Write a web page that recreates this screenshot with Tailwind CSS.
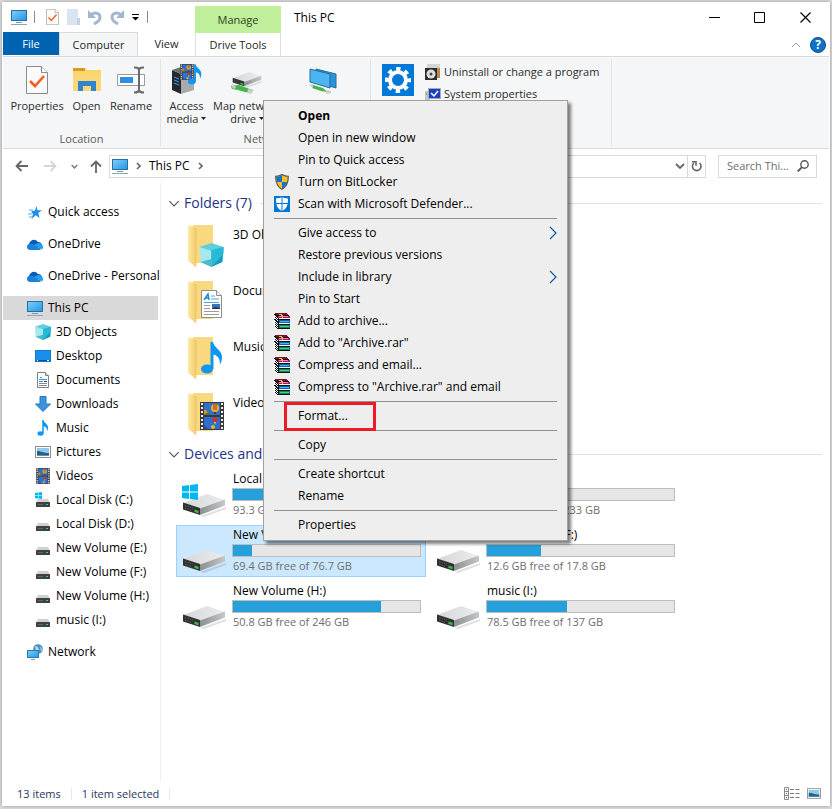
<!DOCTYPE html>
<html lang="en">
<head>
  <meta charset="UTF-8" />
  <meta name="viewport" content="width=device-width, initial-scale=1.0">
  <title>This PC</title>
  <script src="https://cdn.jsdelivr.net/npm/@tailwindcss/browser@4"></script>
</head>

<body class="flex min-h-screen flex-col bg-[#dedede] p-[2px] pb-[3px] font-['Open_Sans','Noto_Sans',sans-serif] text-[12px] leading-4 text-black">

  <!-- Icon sprite -->
  <svg class="absolute h-0 w-0" aria-hidden="true">
    <defs>
      <linearGradient id="screen" x1="0" y1="0" x2="1" y2="1"><stop offset="0" stop-color="#7fd0fb"/><stop offset="1" stop-color="#1f95e6"/></linearGradient>
      <linearGradient id="flap" x1="0" y1="0" x2="1" y2="0"><stop offset="0" stop-color="#ffe9a6"/><stop offset="1" stop-color="#f3cb6b"/></linearGradient>
      <linearGradient id="metal" x1="0" y1="0" x2="1" y2="0"><stop offset="0" stop-color="#d6d7d9"/><stop offset="1" stop-color="#ececee"/></linearGradient>
      <linearGradient id="metalSide" x1="0" y1="0" x2="1" y2="0"><stop offset="0" stop-color="#8d8e90"/><stop offset="1" stop-color="#c6c7c9"/></linearGradient>

      <symbol id="pc" viewBox="0 0 16 16">
        <rect x=".5" y="1.5" width="15" height="10" fill="url(#screen)" stroke="#2b6f9c"/>
        <path d="M5 13.5h6" stroke="#6f9cbd"/><path d="M0 15.5h16" stroke="#8aa7bb"/>
      </symbol>
      <symbol id="checkdoc" viewBox="0 0 22 28">
        <path d="M.5.5h15l6 6v21H.5z" fill="#fbfbfb" stroke="#8b8b8b"/><path d="M15.500.5v6h6" fill="#fff" stroke="#8b8b8b"/>
        <path d="M4 15l5 5 9-10" fill="none" stroke="#f2611c" stroke-width="2.600"/>
      </symbol>
      <symbol id="cube" viewBox="0 0 24 24">
        <path d="M0 4l12 3v17L1 19z" fill="#a5e8ee"/><path d="M12 7l12-3-1 15-11 5z" fill="#0e9cc4"/>
        <path d="M0 4l12-4 12 4-12 4z" fill="#5ecfdd"/><path d="M12 7l12-3v7l-12 13z" fill="#29b9d5"/>
        <path d="M1 19l11-3v8z" fill="#49b9cb"/>
      </symbol>
      <symbol id="textdoc" viewBox="0 0 21 28">
        <path d="M.5.5h15l5 5v22H.5z" fill="#fff" stroke="#8e8e8e"/><path d="M15.500.5v5h5" fill="#eee" stroke="#8e8e8e"/>
        <path d="M3 10l4-6 1 6M5 8h3" fill="none" stroke="#1c8ad6" stroke-width="1.500"/>
        <path d="M10 6h4M10 9h8M3 12.500h15" stroke="#4ba3df"/><path d="M3 15.500h6M3 18.500h6M3 21.500h15M3 24.500h15" stroke="#9a9a9a"/>
        <rect x="11" y="14" width="8" height="5" fill="#3d73b9"/><path d="M11 19l3-2 5 1v1z" fill="#234"/>
      </symbol>
      <symbol id="minidoc" viewBox="0 0 16 16">
        <path d="M2.500.5h8l3 3v12h-11z" fill="#fff" stroke="#808080"/><path d="M10.500.5v3h3" fill="#eee" stroke="#808080"/>
        <path d="M5 5.500h2M4 7.500h8M4 9.500h4" stroke="#2d96dc"/><path d="M9 9.500h3" stroke="#345"/><path d="M4 11.500h8M4 13.500h8" stroke="#8a8a8a"/>
      </symbol>
      <symbol id="note" viewBox="0 0 22 32">
        <ellipse cx="6" cy="27" rx="6" ry="4.500" fill="#0d96f2"/>
        <path d="M9.500 0H12c1 6 9 8 9 15 0 4-1 5-2 8 0-7-2-9-6.500-10.500V27h-3z" fill="#0d96f2"/>
      </symbol>
      <symbol id="film" viewBox="0 0 24 28">
        <rect width="24" height="28" fill="#3a3a3c"/><rect x="4" y="1" width="16" height="12" fill="#2f6fd0"/><rect x="4" y="15" width="16" height="12" fill="#2f6fd0"/>
        <path d="M2 1v27M22 1v27" stroke="#eee" stroke-width="2" stroke-dasharray="2 2"/>
        <circle cx="15" cy="6" r="4" fill="#e8b529"/><path d="M14 2v6M16 2v6" stroke="#b3261e"/><path d="M14 10h2v2h-2z" fill="#5b3a12"/><path d="M4 8c2-1 4 1 4 5H4z" fill="#e8892b"/><path d="M4 13c3-3 5-2 7 0z" fill="#3f7d34"/>
        <circle cx="15" cy="17.500" r="2.500" fill="#c8371f"/><path d="M14 20h2l-1 3z" fill="#f2d13c"/><circle cx="13" cy="25" r="2" fill="#e8b529"/><path d="M4 27v-4l5 4z" fill="#27539c"/>
      </symbol>
      <symbol id="picture" viewBox="0 0 16 12">
        <rect x=".5" y=".5" width="15" height="11" fill="#fff" stroke="#8d8d8d"/><rect x="2" y="2" width="12" height="8" fill="#8fc9f4"/>
        <path d="M2 5c4 0 6 2 12 2v3H2z" fill="#2d5f78"/><path d="M2 9h12v1H2z" fill="#4a93c9"/>
      </symbol>
      <symbol id="desktop" viewBox="0 0 16 12">
        <rect x=".5" y=".5" width="15" height="11" fill="#1590ee" stroke="#1778c4"/><path d="M1 10.500h14" stroke="#0b4f8f"/><path d="M2 10.500h1M12 10.500h2" stroke="#fff"/>
      </symbol>
      <symbol id="download" viewBox="0 0 16 16">
        <path d="M5 .5h6V8h4.500L8 15.500.5 8H5z" fill="#3b93e0" stroke="#2a76bb"/>
      </symbol>
      <symbol id="folder" viewBox="0 0 40 44">
        <path d="M6 0h20v38H6z" fill="#f8d980"/><path d="M1 0l8 3v39l-8-6z" fill="url(#flap)"/><path d="M9 3v39" stroke="#e8bd5b" stroke-width=".6"/>
      </symbol>
      <symbol id="drive" viewBox="0 0 44 24">
        <path d="M18 23l26-9v2L22 24z" fill="#000" opacity=".12"/>
        <path d="M1 10L25 1l18 6-24 9z" fill="url(#metal)"/><path d="M18 15.500l25-9v6L18 22z" fill="url(#metalSide)"/>
        <path d="M1 9.500l17 5.500v7L1 16.500z" fill="#303133"/><path d="M3 12.500l8 2.500M3 15l7 2.500" stroke="#5a5a5a" stroke-dasharray="1.500 1"/><path d="M12.500 16.500l4 1.300v2.400l-4-1.300z" fill="#35c13c"/>
      </symbol>
      <symbol id="minidrive" viewBox="0 0 14 8">
        <path d="M2 0h10l2 4H0z" fill="#cfd1d3"/><rect y="3" width="14" height="5" rx=".5" fill="#3e4042"/><path d="M2 5.500h5" stroke="#666"/><path d="M10 5.500h2" stroke="#3be13f"/>
      </symbol>
      <symbol id="winlogo" viewBox="0 0 16 16">
        <path d="M0 2l7-1v6.500H0zM8 1l8-1v7.500H8zM0 8.500h7V15l-7-1zM8 8.500h8V16l-8-1z" fill="#00b8f1"/>
      </symbol>
      <symbol id="cloud" viewBox="0 0 16 11">
        <path d="M3 10.500A3 3 0 0 1 2 5C3 1 8-1 11 3c3 0 4 2 4 4z" fill="#0a5cb5"/>
        <path d="M0 8c0-3 3-4 6-3l8 5c-.5.700-1 1-2 1H3.500C1.500 11 0 10 0 8z" fill="#1a80d8"/><path d="M7 6l4-2c3 0 5 2 5 4 0 1-.5 2-1 2.500z" fill="#2a9cec"/>
      </symbol>
      <symbol id="star" viewBox="0 0 14 13">
        <path d="M8.500 0l1 4.300H14L10.300 7l1.200 5L7.800 9.300 3.500 13l1.500-5-2-2.700 4-.8z" fill="#1c8fe8"/><path d="M1 4h4M0 8h4M1 11h3" stroke="#4cabf2"/>
      </symbol>
      <symbol id="globe" viewBox="0 0 16 16">
        <circle cx="11" cy="5" r="4.800" fill="#4a90c4"/><path d="M8 2l3 1 1 3-3 1zM13 2l2 3-1 3z" fill="#b4dbe8"/>
        <rect x=".5" y="6.500" width="11" height="7" fill="url(#screen)" stroke="#2f78ad"/><path d="M4 15.500h4" stroke="#7da3bb"/>
      </symbol>
      <symbol id="uac" viewBox="0 0 16 16">
        <path d="M8 .7c2 1 4 1.600 6.300 1.600 0 6-1 10-6.300 13C2.700 12.300 1.700 8.300 1.700 2.300 4 2.300 6 1.700 8 .7z" fill="#f9bd2c" stroke="#5a5a5a" stroke-width="1.300"/>
        <path d="M8 1.500C6.200 2.400 4.300 2.800 2.400 2.900L2.800 8H8z" fill="#1273c9"/><path d="M8 8h5.200c-.6 3-2 5-5.200 6.600z" fill="#1273c9"/>
      </symbol>
      <symbol id="defender" viewBox="0 0 16 16">
        <rect width="16" height="16" fill="#0078d7"/><path d="M8 1c2 1 4 1.400 6 1.400C14 9 13 12.500 8 15 3 12.500 2 9 2 2.400 4 2.400 6 2 8 1z" fill="#fff"/>
        <path d="M8 1v14M2 7.500h12" stroke="#0078d7"/>
      </symbol>
      <symbol id="rar" viewBox="0 0 16 16" shape-rendering="crispEdges">
        <path d="M1 1h12l3 3v12H4l-4-3V1z" fill="#111"/>
        <path d="M0 1l2-1h10l3 2H4z" fill="#7c1230"/>
        <path d="M4 3h12v2H4z" fill="#b01677"/><path d="M5 3.500h9" stroke="#ef7cc0"/><path d="M5 5h11v1H5z" fill="#f4f4f4"/>
        <path d="M5 7h11v3H5z" fill="#0a62b0"/><path d="M6 8.500h9" stroke="#4fb0f0"/><path d="M5 10h11v1H5z" fill="#f4f4f4"/>
        <path d="M5 12h11v3H5z" fill="#0a8a55"/><path d="M6 13.500h9" stroke="#3fd296"/>
        <path d="M0 2.500l4 3M0 4.500l4 3M0 7.500l4 3M0 9.500l4 3M0 11.500l4 3" stroke="#fff"/><path d="M5 1h2v1h1v3" fill="none" stroke="#e0c02b"/>
      </symbol>
      <symbol id="chev" viewBox="0 0 10 6"><path d="M1 1l4 4 4-4" fill="none" stroke="currentColor" stroke-width="var(--w,1)"/></symbol>
      <symbol id="caret" viewBox="0 0 5 3"><path d="M0 0h5L2.500 3z" fill="#222"/></symbol>
      <symbol id="submenu" viewBox="0 0 8 14"><path d="M1 1l6 6-6 6" fill="none" stroke="#15589c" stroke-width="1.200"/></symbol>
      <symbol id="sep" viewBox="0 0 5 8"><path d="M1 1l3 3-3 3" fill="none" stroke="#666" stroke-width="1.600"/></symbol>
      <symbol id="undo" viewBox="0 0 14 16">
        <path d="M3 6C8 2 12 5 12 8.500S9 13 6 15" fill="none" stroke="#a3b6cf" stroke-width="3"/><path d="M0 1v8h8z" fill="#a3b6cf"/>
      </symbol>
    </defs>
  </svg>

  <div class="flex flex-1 flex-col bg-white px-px shadow-[0_0_4px_rgba(0,0,0,0.35)]">

    <!-- Title bar and tabs -->
    <header class="flex h-[54px]">
      <div class="flex w-[192px] flex-col">
        <div class="flex h-[31px] items-center pl-2">
          <svg class="h-4 w-4"><use href="#pc"/></svg>
          <span class="ml-[7px] h-3 w-px bg-[#8c8c8c]"></span>
          <button class="ml-[11px]" aria-label="Properties"><svg class="h-4 w-[13px]"><use href="#checkdoc"/></svg></button>
          <button class="ml-2" aria-label="New folder"><svg class="h-4 w-[13px]" viewBox="0 0 13 16"><path d="M0 0h11v16H0z" fill="#d9e4f2"/><path d="M10 9h3v7h-3z" fill="#c3d2e6"/></svg></button>
          <button class="ml-2" aria-label="Undo"><svg class="h-4 w-[14px]"><use href="#undo"/></svg></button>
          <button class="ml-2" aria-label="Redo"><svg class="h-4 w-[14px] -scale-x-100"><use href="#undo"/></svg></button>
          <button class="ml-2" aria-label="Customize"><svg class="h-[7px] w-[7px]" viewBox="0 0 7 7"><path d="M0 .5h7" stroke="#000"/><path d="M0 3h7L3.500 6.500z" fill="#000"/></svg></button>
          <span class="ml-2 h-3 w-px bg-[#8c8c8c]"></span>
        </div>
        <nav class="flex h-6 text-[#1f1f1f]">
          <button class="mb-px w-14 bg-[#0063b1] text-[11px] text-white">File</button>
          <button class="w-[79px] border border-b-0 border-[#dadbdc] bg-[#f5f6f7] text-[11px]">Computer</button>
          <button class="flex-1 text-[11px]">View</button>
        </nav>
      </div>
      <div class="flex w-[86px] flex-col pt-1 text-[11px]">
        <div class="flex h-[27px] items-center justify-center bg-[#c0ef9b] text-[#2e4220]">Manage</div>
        <button class="h-[23px] border-x border-[#dfdfdf] text-[#1f1f1f]">Drive Tools</button>
      </div>
      <div class="flex flex-1 flex-col">
        <div class="flex h-[31px] items-center pl-[13px]">
          <h1 class="flex-1">This PC</h1>
          <button class="flex w-[45px] justify-center" aria-label="Minimize"><svg class="h-[11px] w-[11px]" viewBox="0 0 11 11"><path d="M0 5.500h11" stroke="#000"/></svg></button>
          <button class="flex w-[45px] justify-center" aria-label="Maximize"><svg class="h-[11px] w-[11px]" viewBox="0 0 11 11"><path d="M.5.5h10v10H.5z" fill="none" stroke="#000"/></svg></button>
          <button class="flex w-[47px] justify-center" aria-label="Close"><svg class="h-[11px] w-[11px]" viewBox="0 0 11 11"><path d="M.5.5l10 10M10.500.5l-10 10" stroke="#000" stroke-width="1.200"/></svg></button>
        </div>
        <div class="flex h-[23px] items-center justify-end gap-[9px] pr-[3px] text-[#999]">
          <button aria-label="Collapse ribbon"><svg class="h-[6px] w-[10px] rotate-180"><use href="#chev"/></svg></button>
          <button class="h-4 w-4 rounded-full border border-[#0a4f8f] bg-[#0f70c8] text-[12px] leading-[14px] font-bold text-white" aria-label="Help">?</button>
        </div>
      </div>
    </header>

    <!-- Ribbon -->
    <section class="flex h-[93px] border-y border-[#dadbdc] bg-[#f5f6f7] py-[2px] text-[11px] whitespace-nowrap text-[#2b2b2b]">
      <div class="flex w-[158px] flex-col border-r border-[#e2e3e4]">
        <div class="flex flex-1 pl-[7px]">
          <button class="flex w-[54px] flex-col items-center pt-[7px]"><svg class="mb-1 h-7 w-[22px]"><use href="#checkdoc"/></svg>Properties</button>
          <button class="flex w-[45px] flex-col items-center pt-[7px]">
            <svg class="mb-1 h-7 w-7" viewBox="0 0 28 28"><path d="M0 2h12l2 2h14v21H0z" fill="#fbd46b"/><path d="M0 2h12v3H0z" fill="#d79b2c"/><path d="M0 8h28v17H0z" fill="#fcd775"/><path d="M5 25V15h18v10h-5v-5h-8v5z" fill="#2f83cf"/></svg>Open
          </button>
          <button class="flex w-[44px] flex-col items-center pt-[7px]">
            <svg class="mb-1 h-7 w-7" viewBox="0 0 28 28"><path d="M.5 8.500h27v11H.5z" fill="#fff" stroke="#9b9b9b"/><path d="M3 11h13v6H3z" fill="#2f8fdf"/><path d="M17 1.500c3 0 4 0 5 2 1-2 2-2 5-2M22 3v21M17 26.500c3 0 4 0 5-2 1 2 2 2 5 2" fill="none" stroke="#6b6b6b" stroke-width="2"/></svg>Rename
          </button>
        </div>
        <p class="text-center leading-[15px] text-[#5a5a5a]">Location</p>
      </div>
      <div class="flex w-[210px] flex-col border-r border-[#e2e3e4]">
        <div class="flex flex-1 pl-1 leading-[13px]">
          <button class="flex w-[43px] flex-col items-center pt-1">
            <svg class="mb-1 h-8 w-8" viewBox="0 0 32 32"><path d="M1 7l9 4v20l-9-4z" fill="#26282b"/><path d="M10 11l13-4v20l-13 4z" fill="#a8aaad"/><path d="M1 7l12-4 10 4-13 4z" fill="#6e7073"/><path d="M3 14l5 2M3 17l5 2M3 20l5 2" stroke="#33a0ff"/><svg x="9" y="1" width="14" height="16"><use href="#film"/></svg><svg x="17" y="1" width="14" height="21"><use href="#note"/></svg></svg>
            <span>Access</span><span class="flex items-center gap-[3px]">media <svg class="h-[3px] w-[5px]"><use href="#caret"/></svg></span>
          </button>
          <button class="flex w-[78px] flex-col items-center pt-1">
            <svg class="mb-1 h-8 w-8" viewBox="0 0 32 32"><svg x="1" y="8" width="30" height="17"><use href="#drive"/></svg><path d="M0 23l8-1 8 3 6 2-2 3-6-1-7-2-6-1z" fill="#42b548"/><path d="M0 22l3-1 2 4-3 1zM17 26l6 1-3 4-4-1z" fill="#c9ccd0"/></svg>
            <span>Map network</span><span class="flex items-center gap-[3px]">drive <svg class="h-[3px] w-[5px]"><use href="#caret"/></svg></span>
          </button>
          <button class="flex w-[74px] flex-col items-center pt-2" aria-label="Add a network location">
            <svg class="h-8 w-8" viewBox="0 0 32 32"><path d="M9 2l20 5v14L9 15z" fill="#2b93dd" stroke="#286a99"/><path d="M3 2l20 5v14L3 15z" fill="#4bb4f3" stroke="#286a99"/><path d="M6 18l10 3 4 4-6-1-9-3z" fill="#42b548"/><path d="M2 18l4-1v4zM19 23l5 1v2l-5 1z" fill="#c9ccd0"/></svg>
          </button>
        </div>
        <p class="text-center leading-[15px] text-[#5a5a5a]">Network</p>
      </div>
      <div class="flex w-[241px] flex-col border-r border-[#e2e3e4]">
        <div class="flex flex-1">
          <button class="flex w-[54px] flex-col items-center pt-[5px]" aria-label="Open Settings">
            <svg class="h-8 w-8" viewBox="0 0 32 32"><path d="M0 0h32v32H0z" fill="#0078d7"/><circle cx="16" cy="16" r="8" fill="none" stroke="#fff" stroke-width="4"/><circle cx="16" cy="16" r="11" fill="none" stroke="#fff" stroke-width="4" stroke-dasharray="4.300 4.340" stroke-dashoffset="2.150"/></svg>
          </button>
          <div class="flex flex-col pt-[2px]">
            <button class="flex h-[22px] items-center gap-[3px]"><svg class="h-4 w-4" viewBox="0 0 16 16"><path d="M2 0h13v4H2z" fill="#d4d4d4"/><path d="M12 4h3v10h-3z" fill="#b98a4c"/><path d="M0 4h12v12H0z" fill="#2c2c2c"/><circle cx="6" cy="10" r="4.500" fill="#ddd"/><circle cx="6" cy="10" r="1.500" fill="#444"/></svg>Uninstall or change a program</button>
            <button class="flex h-[22px] items-center gap-[3px]"><svg class="h-4 w-4" viewBox="0 0 16 16"><path d="M0 5h5v11H0z" fill="#c4c4c4"/><path d="M1 7h1v2H1z" fill="#3c3"/><path d="M3.500 2.500h12v10h-12z" fill="#1a3fc4" stroke="#aaa"/><path d="M6 7l3 3 4-5" fill="none" stroke="#fff" stroke-width="1.500"/><path d="M6 15h8" stroke="#999"/></svg>System properties</button>
          </div>
        </div>
      </div>
    </section>

    <!-- Address bar -->
    <div class="flex h-[34px] items-center pr-3 pl-3">
      <button class="mr-4" aria-label="Back"><svg class="h-3 w-[13px]" viewBox="0 0 13 12"><path d="M13 6H1.500M6.500 1l-5 5 5 5" fill="none" stroke="#666" stroke-width="1.800"/></svg></button>
      <button class="mr-[14px]" aria-label="Forward"><svg class="h-3 w-[13px] -scale-x-100" viewBox="0 0 13 12"><path d="M13 6H1.500M6.500 1l-5 5 5 5" fill="none" stroke="#d6d6d6" stroke-width="1.800"/></svg></button>
      <button class="mr-[12px] text-[#777]" aria-label="Recent locations"><svg class="h-[5px] w-[7px] [--w:2]"><use href="#chev"/></svg></button>
      <button class="mr-[7px]" aria-label="Up"><svg class="h-[13px] w-3" viewBox="0 0 12 13"><path d="M6 13V1.500M1 6.500l5-5 5 5" fill="none" stroke="#666" stroke-width="1.800"/></svg></button>
      <div class="flex h-[23px] flex-1 items-center border border-[#d9d9d9] pl-[2px]">
        <svg class="h-4 w-4"><use href="#pc"/></svg>
        <svg class="mx-[8px] h-2 w-[5px]"><use href="#sep"/></svg>
        <button class="mr-2">This PC</button>
        <svg class="h-2 w-[5px]"><use href="#sep"/></svg>
        <button class="ml-auto text-[#666]" aria-label="Previous locations"><svg class="mr-[2px] h-[6px] w-[10px] [--w:1.800]"><use href="#chev"/></svg></button>
        <button class="flex h-full w-[18px] items-center justify-center border-l border-[#d9d9d9]" aria-label="Refresh"><svg class="h-3 w-[11px]" viewBox="0 0 11 12"><path d="M8.500 3A4.300 4.300 0 1 1 3 3M1 1.800h4v4" fill="none" stroke="#666" stroke-width="1.600"/></svg></button>
      </div>
      <div class="ml-3 flex h-[23px] w-[99px] items-center border border-[#d9d9d9] pr-[7px] pl-2">
        <input type="text" placeholder="Search This PC" aria-label="Search This PC" class="min-w-0 flex-1 text-[11px] text-ellipsis outline-none placeholder:text-[#6d6d6d]" />
        <svg class="ml-[6px] h-3 w-3" viewBox="0 0 12 12"><circle cx="7.500" cy="4.500" r="3.700" fill="none" stroke="#555" stroke-width="1.400"/><path d="M5 7.200L.7 11.500" stroke="#555" stroke-width="1.800"/></svg>
      </div>
    </div>

    <div class="flex flex-1">
      <!-- Navigation pane -->
      <nav class="flex w-[158px] flex-col gap-2 border-r border-[#f0f0f0] pt-[17px] pr-[2px] whitespace-nowrap">
        <a href="#" class="flex h-6 items-center gap-[5px] pl-6"><svg class="h-[13px] w-4 shrink-0"><use href="#star"/></svg>Quick access</a>
        <a href="#" class="flex h-6 items-center gap-[5px] pl-6"><svg class="h-[11px] w-4 shrink-0"><use href="#cloud"/></svg>OneDrive</a>
        <a href="#" class="flex h-6 items-center gap-[5px] pl-6"><svg class="h-[11px] w-4 shrink-0"><use href="#cloud"/></svg>OneDrive - Personal</a>
        <div>
          <a href="#" class="flex h-6 items-center gap-[5px] bg-[#d9d9d9] pl-6"><svg class="h-4 w-4"><use href="#pc"/></svg>This PC</a>
          <a href="#" class="flex h-6 items-center gap-[5px] pl-8"><svg class="h-4 w-4"><use href="#cube"/></svg>3D Objects</a>
          <a href="#" class="flex h-6 items-center gap-[5px] pl-8"><svg class="h-3 w-4"><use href="#desktop"/></svg>Desktop</a>
          <a href="#" class="flex h-6 items-center gap-[5px] pl-8"><svg class="h-4 w-4"><use href="#minidoc"/></svg>Documents</a>
          <a href="#" class="flex h-6 items-center gap-[5px] pl-8"><svg class="h-4 w-4"><use href="#download"/></svg>Downloads</a>
          <a href="#" class="flex h-6 items-center gap-[5px] pl-8"><svg class="h-4 w-4"><use href="#note"/></svg>Music</a>
          <a href="#" class="flex h-6 items-center gap-[5px] pl-8"><svg class="h-3 w-4"><use href="#picture"/></svg>Pictures</a>
          <a href="#" class="flex h-6 items-center gap-[5px] pl-8"><svg class="h-4 w-4"><use href="#film"/></svg>Videos</a>
          <a href="#" class="flex h-6 items-center gap-[5px] pl-8"><svg class="h-4 w-4" viewBox="0 0 16 16"><svg width="7" height="7"><use href="#winlogo"/></svg><svg x="1" y="7" width="14" height="8"><use href="#minidrive"/></svg></svg>Local Disk (C:)</a>
          <a href="#" class="flex h-6 items-center gap-[5px] pl-8"><svg class="h-4 w-4" viewBox="0 0 16 16"><svg x="1" y="7" width="14" height="8"><use href="#minidrive"/></svg></svg>Local Disk (D:)</a>
          <a href="#" class="flex h-6 items-center gap-[5px] pl-8"><svg class="h-4 w-4" viewBox="0 0 16 16"><svg x="1" y="7" width="14" height="8"><use href="#minidrive"/></svg></svg>New Volume (E:)</a>
          <a href="#" class="flex h-6 items-center gap-[5px] pl-8"><svg class="h-4 w-4" viewBox="0 0 16 16"><svg x="1" y="7" width="14" height="8"><use href="#minidrive"/></svg></svg>New Volume (F:)</a>
          <a href="#" class="flex h-6 items-center gap-[5px] pl-8"><svg class="h-4 w-4" viewBox="0 0 16 16"><svg x="1" y="7" width="14" height="8"><use href="#minidrive"/></svg></svg>New Volume (H:)</a>
          <a href="#" class="flex h-6 items-center gap-[5px] pl-8"><svg class="h-4 w-4" viewBox="0 0 16 16"><svg x="1" y="7" width="14" height="8"><use href="#minidrive"/></svg></svg>music (I:)</a>
        </div>
        <a href="#" class="flex h-6 items-center gap-[5px] pl-6"><svg class="h-4 w-4"><use href="#globe"/></svg>Network</a>
      </nav>

      <!-- Files -->
      <main class="flex-1 pt-[10px] pr-[7px] pl-[7px]">
        <div class="flex h-5 items-center gap-1">
          <svg class="h-[7px] w-3 text-[#555]"><use href="#chev"/></svg>
          <h2 class="text-[14px] text-[#1e3287]">Folders (7)</h2>
          <span class="ml-1 h-px flex-1 bg-[#e2e2e2]"></span>
        </div>
        <div class="mt-2 ml-2 grid grid-cols-[250px] gap-1">
          <a href="#" class="flex h-[52px] pl-[11px]"><svg class="mt-1 h-11 w-10" viewBox="0 0 40 44"><use href="#folder"/><svg x="12" y="18" width="25" height="24"><use href="#cube"/></svg></svg><span class="mt-[6px] ml-[6px]">3D Objects</span></a>
          <a href="#" class="flex h-[52px] pl-[11px]"><svg class="mt-1 h-11 w-10" viewBox="0 0 40 44"><use href="#folder"/><svg x="14" y="9" width="21" height="28"><use href="#textdoc"/></svg></svg><span class="mt-[6px] ml-[6px]">Documents</span></a>
          <a href="#" class="flex h-[52px] pl-[11px]"><svg class="mt-1 h-11 w-10" viewBox="0 0 40 44"><use href="#folder"/><svg x="14" y="5" width="22" height="32"><use href="#note"/></svg></svg><span class="mt-[6px] ml-[6px]">Music</span></a>
          <a href="#" class="flex h-[52px] pl-[11px]"><svg class="mt-1 h-11 w-10" viewBox="0 0 40 44"><use href="#folder"/><svg x="13" y="9" width="24" height="28"><use href="#film"/></svg></svg><span class="mt-[6px] ml-[6px]">Videos</span></a>
        </div>

        <div class="mt-[3px] flex h-5 items-center gap-1">
          <svg class="h-[7px] w-3 text-[#555]"><use href="#chev"/></svg>
          <h2 class="text-[14px] text-[#1e3287]">Devices and drives (6)</h2>
          <span class="ml-1 h-px flex-1 bg-[#e2e2e2]"></span>
        </div>
        <div id="drives" class="mt-[5px] ml-2 grid grid-cols-[250px_250px] gap-1"></div>
      </main>
    </div>

    <!-- Status bar -->
    <footer class="flex h-[25px] items-center pr-2 pl-[14px] text-[11px] text-[#1e395b]">
      <span class="border-r border-[#e8e8e8] pr-[10px] leading-3">13 items</span>
      <span class="border-r border-[#e8e8e8] px-[10px] leading-3">1 item selected</span>
      <button class="ml-auto" aria-label="Details view"><svg class="h-[13px] w-4" viewBox="0 0 16 13"><path d="M.5.5h4v12h-4zM.5 4.500h4M.5 8.500h4" fill="none" stroke="#8a8a8a"/><path d="M2 2.500h1M2 6.500h1" stroke="#1a7ad0"/><path d="M2 10.500h1" stroke="#c22"/><path d="M6 2.500h10M6 6.500h10M6 10.500h10" stroke="#777" stroke-dasharray="4 1.500"/></svg></button>
      <button class="ml-[7px]" aria-label="Large icons view"><svg class="h-[11px] w-[14px]"><use href="#picture"/></svg></button>
    </footer>
  </div>

  <!-- Context menu -->
  <div role="menu" class="absolute top-[100px] left-[263px] flex w-[305px] flex-col border border-[#a0a0a0] bg-[#eeeeee] px-[10px] py-1 shadow-[3px_3px_3px_rgba(0,0,0,0.5)]">
    <button role="menuitem" class="h-[22px] pl-6 text-left font-bold">Open</button>
    <button role="menuitem" class="h-[22px] pl-6 text-left">Open in new window</button>
    <button role="menuitem" class="h-[22px] pl-6 text-left">Pin to Quick access</button>
    <button role="menuitem" class="flex h-[22px] items-center gap-2"><svg class="h-4 w-4"><use href="#uac"/></svg>Turn on BitLocker</button>
    <button role="menuitem" class="flex h-[22px] items-center gap-2"><svg class="h-4 w-4"><use href="#defender"/></svg>Scan with Microsoft Defender...</button>
    <hr class="my-[3px] border-[#919191]">
    <button role="menuitem" class="flex h-[22px] items-center justify-between pl-6">Give access to<svg class="h-[14px] w-2"><use href="#submenu"/></svg></button>
    <button role="menuitem" class="h-[22px] pl-6 text-left">Restore previous versions</button>
    <button role="menuitem" class="flex h-[22px] items-center justify-between pl-6">Include in library<svg class="h-[14px] w-2"><use href="#submenu"/></svg></button>
    <button role="menuitem" class="h-[22px] pl-6 text-left">Pin to Start</button>
    <button role="menuitem" class="flex h-[22px] items-center gap-2"><svg class="h-4 w-4"><use href="#rar"/></svg>Add to archive...</button>
    <button role="menuitem" class="flex h-[22px] items-center gap-2"><svg class="h-4 w-4"><use href="#rar"/></svg>Add to "Archive.rar"</button>
    <button role="menuitem" class="flex h-[22px] items-center gap-2"><svg class="h-4 w-4"><use href="#rar"/></svg>Compress and email...</button>
    <button role="menuitem" class="flex h-[22px] items-center gap-2"><svg class="h-4 w-4"><use href="#rar"/></svg>Compress to "Archive.rar" and email</button>
    <hr class="my-[3px] border-[#919191]">
    <button role="menuitem" class="relative h-[22px] pl-6 text-left">Format...
      <span class="absolute -top-[3px] left-[10px] h-[29px] w-[92px] border-3 border-[#ed1c24]"></span>
    </button>
    <hr class="my-[3px] border-[#919191]">
    <button role="menuitem" class="h-[22px] pl-6 text-left">Copy</button>
    <hr class="my-[3px] border-[#919191]">
    <button role="menuitem" class="h-[22px] pl-6 text-left">Create shortcut</button>
    <button role="menuitem" class="h-[22px] pl-6 text-left">Rename</button>
    <hr class="my-[3px] border-[#919191]">
    <button role="menuitem" class="h-[22px] pl-6 text-left">Properties</button>
  </div>

  <script>
    const drives = [
      { name: "Local Disk (C:)", info: "93.3 GB free of 232 GB", used: 60, system: true },
      { name: "Local Disk (D:)", info: "130 GB free of 233 GB", used: 42 },
      { name: "New Volume (E:)", info: "69.4 GB free of 76.7 GB", used: 10, selected: true },
      { name: "New Volume (F:)", info: "12.6 GB free of 17.8 GB", used: 29 },
      { name: "New Volume (H:)", info: "50.8 GB free of 246 GB", used: 79 },
      { name: "music (I:)", info: "78.5 GB free of 137 GB", used: 43 },
    ];

    document.getElementById("drives").innerHTML = drives.map(d => `
      <a href="#" class="flex h-[52px] border pl-[5px] ${d.selected ? "border-[#99d1ff] bg-[#cce8ff]" : "border-transparent"}">
        <svg class="mt-[7px] h-10 w-11" viewBox="0 0 44 40">
          <svg y="16" width="44" height="24"><use href="#drive"/></svg>
          ${d.system ? '<svg y="7" width="16" height="16"><use href="#winlogo"/></svg>' : ""}
        </svg>
        <div class="ml-[6px] w-[189px] pt-px">
          <p class="pl-px">${d.name}</p>
          <div role="progressbar" aria-label="${d.name}" aria-valuenow="${d.used}" class="mt-px h-[13px] border border-[#bcbcbc] bg-[#e6e6e6]">
            <div class="h-full bg-[#26a0da]" style="width: ${d.used}%"></div>
          </div>
          <p class="pl-px text-[11px] leading-[17px] text-[#6d6d6d]">${d.info}</p>
        </div>
      </a>`).join("");
  </script>

</body>
</html>
